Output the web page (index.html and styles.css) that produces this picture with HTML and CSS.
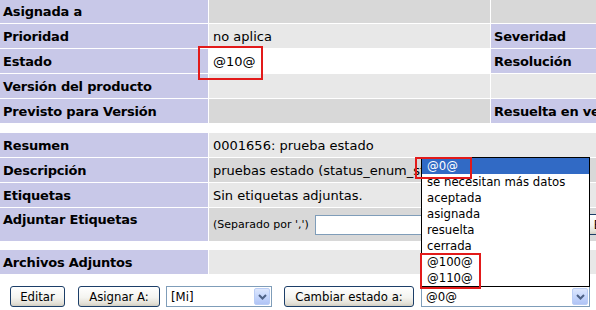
FILE: index.html
```html
<!DOCTYPE html>
<html lang="es">
<head>
<meta charset="utf-8">
<title>Mantis - ver incidencia</title>
<link rel="stylesheet" href="styles.css">
</head>
<body>
<div class="page">
  <div class="grid top">
    <div class="lab">Asignada a</div>
    <div class="cell dark"></div>
    <div class="cell dark"></div>
    <div class="cell dark"></div>

    <div class="lab">Prioridad</div>
    <div class="cell light">no aplica</div>
    <div class="lab">Severidad</div>
    <div class="cell light"></div>

    <div class="lab">Estado</div>
    <div class="cell white status">@10@<span class="mark mark-status"></span></div>
    <div class="lab">Resolución</div>
    <div class="cell white"></div>

    <div class="lab">Versión del producto</div>
    <div class="cell light"></div>
    <div class="cell light"></div>
    <div class="cell light"></div>

    <div class="lab">Previsto para Versión</div>
    <div class="cell dark"></div>
    <div class="lab">Resuelta en versión</div>
    <div class="cell dark"></div>
  </div>

  <div class="grid wide info">
    <div class="lab">Resumen</div>
    <div class="cell light">0001656: prueba estado</div>

    <div class="lab">Descripción</div>
    <div class="cell dark">pruebas estado (status_enum_string)</div>

    <div class="lab">Etiquetas</div>
    <div class="cell light">Sin etiquetas adjuntas.</div>

    <div class="lab lab-tall">Adjuntar Etiquetas</div>
    <div class="cell dark tagcell">
      <span class="hint">(Separado por ',')</span>
      <input class="textin" type="text" value="">
      <button class="btn tagbtn" type="button">Etiquetar</button>
    </div>
  </div>

  <div class="grid wide files">
    <div class="lab">Archivos Adjuntos</div>
    <div class="cell light"></div>
  </div>

  <div class="actions">
    <button class="btn btn-edit" type="button">Editar</button>
    <button class="btn btn-assign" type="button">Asignar A:</button>
    <div class="select sel-mi">
      <span class="sel-text">[Mi]</span>
      <span class="sel-arrow"><svg width="9" height="6" viewBox="0 0 9 6"><path d="M1 1 L4.5 4.5 L8 1" fill="none" stroke="#4d6185" stroke-width="2"/></svg></span>
    </div>
    <button class="btn btn-status" type="button">Cambiar estado a:</button>
    <div class="select sel-status">
      <span class="sel-text">@0@</span>
      <span class="sel-arrow"><svg width="9" height="6" viewBox="0 0 9 6"><path d="M1 1 L4.5 4.5 L8 1" fill="none" stroke="#4d6185" stroke-width="2"/></svg></span>
      <ul class="droplist">
        <li class="opt selected">@0@</li>
        <li class="opt">se necesitan más datos</li>
        <li class="opt">aceptada</li>
        <li class="opt">asignada</li>
        <li class="opt">resuelta</li>
        <li class="opt">cerrada</li>
        <li class="opt">@100@</li>
        <li class="opt">@110@</li>
        <li class="mark mark-first"></li>
        <li class="mark mark-last"></li>
      </ul>
    </div>
  </div>
</div>
</body>
</html>
```
FILE: styles.css
```css
html, body {
  margin: 0;
  padding: 0;
  background: #ffffff;
  overflow: hidden;
}
body {
  font-family: "DejaVu Sans", Verdana, sans-serif;
  font-size: 13px;
  color: #000000;
}
.page {
  width: 900px;
}
.grid {
  display: grid;
  gap: 1px;
}
.top {
  grid-template-columns: 208px 281px 150px 1fr;
  grid-template-rows: 23px 24px 24px 24px 24px;
}
.wide {
  grid-template-columns: 208px 1fr;
}
.info {
  margin-top: 10px;
  grid-template-rows: 24px 24px 24px 33px;
}
.files {
  margin-top: 9px;
  grid-template-rows: 24px;
}
.lab {
  background: #c8c8e8;
  font-weight: bold;
  padding-left: 3px;
  display: flex;
  align-items: center;
  white-space: nowrap;
  overflow: hidden;
  letter-spacing: -0.2px;
}
.lab-tall {
  align-items: flex-start;
  padding-top: 4px;
}
.cell {
  padding-left: 4px;
  display: flex;
  align-items: center;
  white-space: nowrap;
  overflow: hidden;
}
.light { background: #e8e8e8; }
.dark { background: #d8d8d8; }
.white { background: #ffffff; }
.status { position: relative; overflow: visible; }

.mark {
  position: absolute;
  border: 2px solid #e21a1a;
  box-sizing: border-box;
  list-style: none;
  pointer-events: none;
}
.mark-status {
  left: -11px;
  top: -3px;
  width: 65px;
  height: 34px;
}

.tagcell {
  gap: 6px;
}
.hint {
  font-size: 11px;
}
.textin {
  box-sizing: border-box;
  width: 265px;
  height: 20px;
  margin: 0;
  border: 1px solid #7f9db9;
  background: #ffffff;
  padding: 0 3px;
  font: 13px "DejaVu Sans", sans-serif;
}
.tagbtn {
  margin-left: -1px;
}

.actions {
  display: flex;
  align-items: center;
  margin-top: 12px;
  padding-left: 10px;
  font-family: "DejaVu Sans Condensed", "DejaVu Sans", sans-serif;
  font-stretch: condensed;
}
.btn {
  box-sizing: border-box;
  height: 21px;
  padding: 0 8px;
  border: 1px solid #1c3e68;
  border-radius: 3px;
  background: linear-gradient(#ffffff 0%, #f4f4f0 55%, #e4e1d8 85%, #d2cec2 100%);
  font-family: "DejaVu Sans Condensed", "DejaVu Sans", sans-serif;
  font-stretch: condensed;
  font-size: 13px;
  color: #000000;
  line-height: 19px;
  white-space: nowrap;
}
.btn-edit { width: 55px; }
.btn-assign { width: 82px; margin-left: 13px; }
.btn-status { width: 130px; margin-left: 12px; }

.select {
  box-sizing: border-box;
  position: relative;
  height: 21px;
  border: 1px solid #7f9db9;
  background: #ffffff;
  display: flex;
  align-items: center;
  font-size: 13px;
}
.sel-mi { width: 106px; margin-left: 6px; }
.sel-status { width: 169px; margin-left: 7px; }
.sel-text {
  flex: 1;
  padding-left: 4px;
  white-space: nowrap;
}
.sel-arrow {
  box-sizing: border-box;
  width: 16px;
  height: 17px;
  margin-right: 1px;
  border: 1px solid #bacdf5;
  border-radius: 2px;
  background: linear-gradient(#dde7fd, #c1d3fb 60%, #b0c4f5);
  display: flex;
  align-items: center;
  justify-content: center;
}

.droplist {
  position: absolute;
  left: -1px;
  bottom: 100%;
  width: 169px;
  box-sizing: border-box;
  margin: 0;
  padding: 0;
  list-style: none;
  border: 1px solid #000000;
  background: #ffffff;
}
.opt {
  height: 16px;
  line-height: 16px;
  padding-left: 5px;
  white-space: nowrap;
}
.selected {
  background: #316ac5;
  color: #ffffff;
}
.mark-first {
  left: -7px;
  top: -1px;
  width: 57px;
  height: 22px;
}
.mark-last {
  left: -2px;
  top: 95px;
  width: 61px;
  height: 36px;
}
```
